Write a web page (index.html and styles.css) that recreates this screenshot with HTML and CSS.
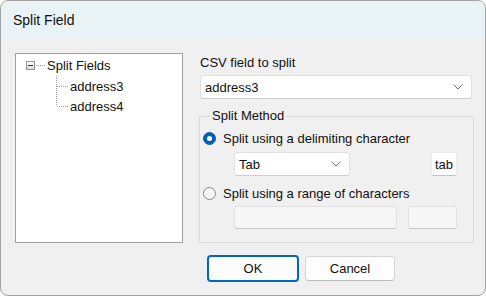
FILE: index.html
```html
<!DOCTYPE html>
<html lang="en">
<head>
  <meta charset="UTF-8">
  <title>Split Field</title>
  <link rel="stylesheet" href="styles.css">
</head>
<body>
  <div class="window">
    <!-- Title bar -->
    <div class="titlebar">Split Field</div>

    <div class="client">
      <div class="main">
        <!-- Tree of split fields -->
        <div class="tree">
          <div class="tree-root">
            <span class="expander"></span>
            <span class="root-line"></span>
            <span>Split Fields</span>
          </div>
          <ul class="tree-children">
            <li><svg class="connector" width="12" height="20"><path d="M0.5 0V20M1 10.5H12"/></svg>address3</li>
            <li><svg class="connector" width="12" height="20"><path d="M0.5 0V10M1 10.5H12"/></svg>address4</li>
          </ul>
        </div>

        <!-- Options -->
        <div class="options">
          <div class="field-label">CSV field to split</div>
          <div class="combo">
            <span>address3</span>
            <svg class="chevron" width="10" height="6"><path d="M0.5 0.5L5 5L9.5 0.5"/></svg>
          </div>

          <fieldset class="method">
            <legend>Split Method</legend>
            <div class="radio-row"><span class="radio checked"></span>Split using a delimiting character</div>
            <div class="delim-row">
              <div class="combo small">
                <span>Tab</span>
                <svg class="chevron" width="10" height="6"><path d="M0.5 0.5L5 5L9.5 0.5"/></svg>
              </div>
              <button class="btn tab-btn">tab</button>
            </div>
            <div class="radio-row second"><span class="radio"></span>Split using a range of characters</div>
            <div class="range-row">
              <span class="input start"></span>
              <span class="input end"></span>
            </div>
          </fieldset>
        </div>
      </div>

      <!-- Dialog buttons -->
      <div class="actions">
        <button class="btn default">OK</button>
        <button class="btn">Cancel</button>
      </div>
    </div>
  </div>
</body>
</html>
```

FILE: styles.css
```css
* {
  margin: 0;
  padding: 0;
  box-sizing: border-box;
}

body {
  background: #fff;
  font-family: 'Liberation Sans', Arial, sans-serif;
  font-size: 13px;
  color: #111;
}

/* Window frame */
.window {
  width: 486px;
  height: 296px;
  border: 1px solid #a2a2a2;
  border-radius: 8px;
  overflow: hidden;
  display: flex;
  flex-direction: column;
  background: #f0f0f0;
}

.titlebar {
  height: 38px;
  flex-shrink: 0;
  background: #e9f3f6;
  padding-left: 12px;
  font-size: 14px;
  line-height: 38px;
}

.client {
  flex: 1;
  display: flex;
  flex-direction: column;
}

.main {
  display: flex;
  gap: 16px;
  padding: 14px 13px 0 14px;
}

/* Tree */
.tree {
  width: 168px;
  height: 190px;
  background: #fff;
  border: 1px solid #a0a0a0;
  padding: 1px 0 0 10px;
}

.tree-root {
  display: flex;
  align-items: center;
  height: 20px;
}

.expander {
  width: 9px;
  height: 9px;
  border: 1px solid #939393;
  background: linear-gradient(#fdfdfd, #dcdcdc);
  display: inline-flex;
  align-items: center;
  justify-content: center;
}

.expander::before {
  content: '';
  width: 5px;
  height: 1px;
  background: #27336e;
}

.root-line {
  width: 9px;
  margin-left: 1px;
  border-top: 1px dotted #a0a0a0;
}

.tree-root span:last-child {
  margin-left: 2px;
}

.tree-children {
  list-style: none;
  padding-left: 30px;
  margin-top: 1px;
}

.tree-children li {
  display: flex;
  align-items: center;
  height: 20px;
}

.connector {
  margin-right: 2px;
}

.connector path {
  fill: none;
  stroke: #a0a0a0;
  stroke-width: 1;
  stroke-dasharray: 1 1;
  shape-rendering: crispEdges;
}

/* Options column */
.options {
  width: 273px;
  display: flex;
  flex-direction: column;
}

.field-label {
  height: 20px;
  line-height: 20px;
  padding-left: 1px;
}

.combo {
  margin-top: 2px;
  margin-left: 1px;
  height: 24px;
  background: #fff;
  border: 1px solid #e0e0e0;
  border-bottom-color: #cdcdcd;
  border-radius: 3px;
  display: flex;
  align-items: center;
  justify-content: space-between;
  padding: 0 8px 0 4px;
}

.chevron path {
  fill: none;
  stroke: #6e6e6e;
  stroke-width: 1;
}

.combo.small {
  margin: 0;
  width: 116px;
}

/* Group box */
.method {
  margin-top: 9px;
  height: 135px;
  border: 1px solid #dadada;
  border-radius: 2px;
  padding: 0 16px 0 1px;
}

.method legend {
  margin-left: 9px;
  padding: 0 2px;
  line-height: 16px;
}

.radio-row {
  display: flex;
  align-items: center;
  height: 18px;
  margin-top: 5px;
}

.radio-row.second {
  margin-top: 8px;
}

.radio {
  width: 13px;
  height: 13px;
  margin: 0 7px 0 2px;
  border-radius: 50%;
  border: 1px solid #8a8a8a;
  background: #f5f5f5;
  display: inline-flex;
  align-items: center;
  justify-content: center;
}

.radio.checked {
  border-color: #005fb8;
  background: #005fb8;
}

.radio.checked::before {
  content: '';
  width: 5px;
  height: 5px;
  border-radius: 50%;
  background: #fff;
}

.delim-row {
  display: flex;
  justify-content: space-between;
  align-items: center;
  margin-top: 5px;
  padding-left: 33px;
}

.range-row {
  display: flex;
  gap: 11px;
  margin-top: 4px;
  padding-left: 33px;
}

.input {
  height: 23px;
  background: #f6f6f6;
  border: 1px solid #e2e2e2;
  border-bottom-color: #c8c8c8;
  border-radius: 3px;
}

.input.start {
  width: 163px;
}

.input.end {
  width: 49px;
}

/* Buttons */
.btn {
  font-family: inherit;
  font-size: 13px;
  color: #111;
  background: #fdfdfd;
  border: 1px solid #d5d5d5;
  border-bottom-color: #bdbdbd;
  border-radius: 4px;
}

.tab-btn {
  width: 26px;
  height: 24px;
  background: #fff;
  border-color: #ececec;
  border-bottom-color: #c4c4c4;
  border-radius: 2px;
}

.actions {
  display: flex;
  align-items: center;
  gap: 6px;
  margin-top: 12px;
  padding-left: 206px;
}

.actions .btn {
  width: 90px;
  height: 25px;
}

.actions .btn.default {
  width: 92px;
  height: 27px;
  border: 2px solid #0067c0;
}
```
